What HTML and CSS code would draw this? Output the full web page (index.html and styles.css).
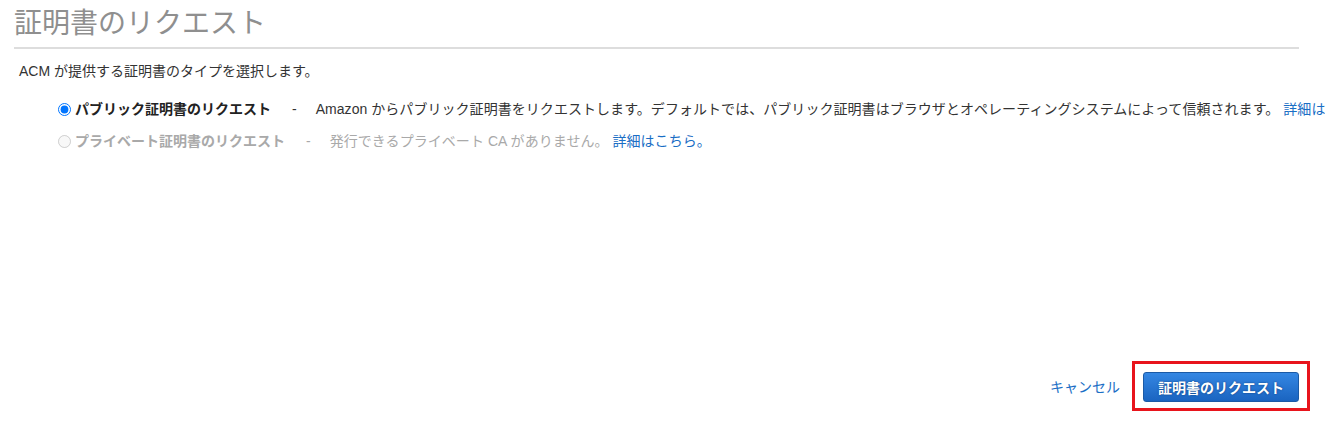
FILE: index.html
```html
<!DOCTYPE html>
<html lang="ja">
<head>
<meta charset="utf-8">
<title>証明書のリクエスト</title>
<link rel="stylesheet" href="styles.css">
</head>
<body>
<div class="page">
  <h1 class="title">証明書のリクエスト</h1>
  <p class="intro">ACM が提供する証明書のタイプを選択します。</p>
  <div class="options">
    <label class="option">
      <input type="radio" name="type" checked>
      <span class="opt-name">パブリック証明書のリクエスト</span>
      <span class="dash">-</span>
      <span class="opt-desc">Amazon からパブリック証明書をリクエストします。デフォルトでは、パブリック証明書はブラウザとオペレーティングシステムによって信頼されます。 <a class="link" href="#">詳細はこちら。</a></span>
    </label>
    <label class="option disabled">
      <input type="radio" name="type" disabled>
      <span class="opt-name">プライベート証明書のリクエスト</span>
      <span class="dash">-</span>
      <span class="opt-desc">発行できるプライベート CA がありません。 <a class="link" href="#">詳細はこちら。</a></span>
    </label>
  </div>
  <div class="footer">
    <a class="link cancel" href="#">キャンセル</a>
    <span class="highlight"><button class="primary" type="button">証明書のリクエスト</button></span>
  </div>
</div>
</body>
</html>
```

FILE: styles.css
```css
html, body {
  margin: 0;
  padding: 0;
  background: #fff;
  overflow: hidden;
}
body {
  font-family: "Liberation Sans", "Noto Sans CJK JP", sans-serif;
  font-size: 14px;
  color: #333;
  width: 1325px;
  height: 442px;
}
.page {
  height: 442px;
  display: flex;
  flex-direction: column;
  padding: 0 26px 0 14px;
  box-sizing: border-box;
}
.title {
  margin: 6px 0 0 0;
  font-weight: 400;
  font-size: 28px;
  line-height: 36px;
  color: #8f8f8f;
  padding-bottom: 5px;
  border-bottom: 2px solid #dddddd;
}
.intro {
  margin: 12px 0 0 5px;
  line-height: 20px;
  color: #333;
}
.options {
  margin: 18px 0 0 44px;
  display: flex;
  flex-direction: column;
  gap: 12px;
}
.option {
  display: flex;
  align-items: center;
  white-space: nowrap;
  line-height: 20px;
}
.option input {
  margin: 0 4px 0 0;
  width: 13px;
  height: 13px;
}
.opt-name {
  font-weight: 700;
  color: #222;
}
.dash {
  margin: 0 19px 0 21px;
}
.opt-desc {
  letter-spacing: 0.05px;
}
.disabled .opt-name,
.disabled .dash,
.disabled .opt-desc {
  color: #a9a9a9;
}
.link {
  color: #1a6ec5;
  text-decoration: none;
}
.footer {
  margin-top: auto;
  margin-bottom: 40px;
  display: flex;
  justify-content: flex-end;
  align-items: center;
  gap: 23px;
}
.cancel {
  line-height: 20px;
}
.highlight {
  position: relative;
  display: flex;
}
.highlight::after {
  content: "";
  position: absolute;
  left: -11px;
  right: -11px;
  top: -11px;
  bottom: -9px;
  border: 3px solid #e8141c;
  pointer-events: none;
}
.primary {
  width: 156px;
  height: 30px;
  border: 1px solid #1b5aa6;
  border-radius: 3px;
  background: linear-gradient(#3587e3, #1a64c0);
  color: #fff;
  font-family: inherit;
  font-size: 14px;
  font-weight: 700;
  text-shadow: 0 0 2px #0b3a78;
  padding: 0;
}
```
